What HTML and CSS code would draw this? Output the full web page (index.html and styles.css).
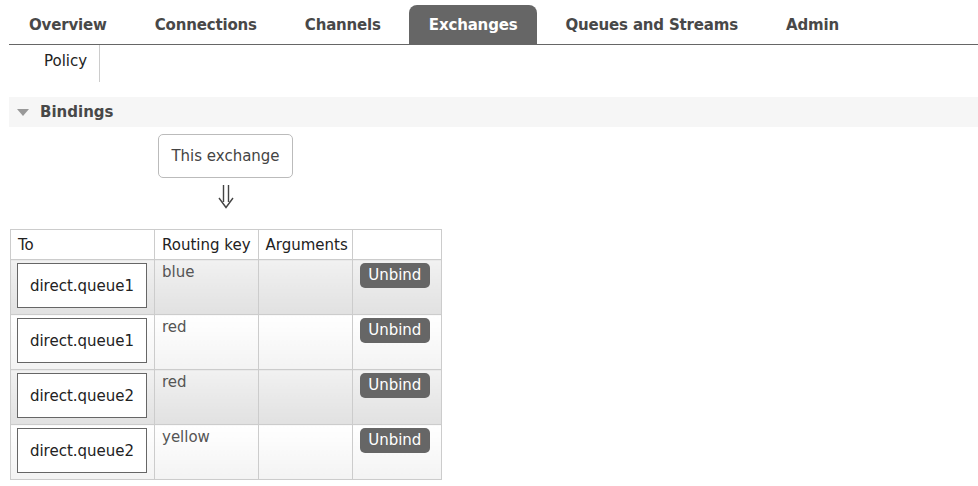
FILE: index.html
```html
<!DOCTYPE html>
<html>
<head>
<meta charset="utf-8">
<link rel="stylesheet" href="styles.css">
</head>
<body>
<div class="page">
  <div class="menu">
    <ul class="tabs">
      <li class="tab">Overview</li>
      <li class="tab">Connections</li>
      <li class="tab">Channels</li>
      <li class="tab active">Exchanges</li>
      <li class="tab">Queues and Streams</li>
      <li class="tab">Admin</li>
    </ul>
    <ul class="subtabs">
      <li class="subtab">Policy</li>
    </ul>
  </div>

  <div class="section">
    <h2 class="sec-head"><span class="tri"></span>Bindings</h2>
    <div class="diagram">
      <div class="exch">This exchange</div>
      <div class="arrow">
        <svg width="16" height="24" viewBox="0 0 16 24" aria-label="⇓">
          <path d="M5.5 0 V17 M10.5 0 V17 M1 13 L8 22.5 L15 13" fill="none" stroke="#444" stroke-width="1.4" stroke-linejoin="miter"/>
        </svg>
      </div>
    </div>
    <table class="bindings">
      <thead>
        <tr><th class="c-to">To</th><th class="c-key">Routing key</th><th class="c-args">Arguments</th><th class="c-act"></th></tr>
      </thead>
      <tbody>
        <tr class="odd"><td><div class="q">direct.queue1</div></td><td class="key">blue</td><td></td><td class="act"><span class="btn">Unbind</span></td></tr>
        <tr class="even"><td><div class="q">direct.queue1</div></td><td class="key">red</td><td></td><td class="act"><span class="btn">Unbind</span></td></tr>
        <tr class="odd"><td><div class="q">direct.queue2</div></td><td class="key">red</td><td></td><td class="act"><span class="btn">Unbind</span></td></tr>
        <tr class="even"><td><div class="q">direct.queue2</div></td><td class="key">yellow</td><td></td><td class="act"><span class="btn">Unbind</span></td></tr>
      </tbody>
    </table>
  </div>
</div>
</body>
</html>
```

FILE: styles.css
```css
html, body {
  margin: 0;
  padding: 0;
  background: #fff;
}
body {
  font-family: "DejaVu Sans", Verdana, sans-serif;
  font-size: 15px;
  color: #484848;
}
.page {
  padding: 5px 0 0 9px;
}
.tabs {
  list-style: none;
  margin: 0;
  padding: 0;
  display: flex;
  border-bottom: 1px solid #666;
  height: 39px;
}
.tab {
  padding: 0 20px;
  margin-right: 8px;
  font-weight: bold;
  font-size: 15px;
  letter-spacing: -0.17px;
  line-height: 41px;
  color: #484848;
  border-radius: 8px 8px 0 0;
  white-space: nowrap;
}
.tab.active {
  background: #666;
  color: #fff;
}
.subtabs {
  list-style: none;
  margin: 0;
  padding: 0 0 0 35px;
  display: flex;
}
.subtab {
  height: 37px;
  line-height: 32px;
  padding-right: 12px;
  border-right: 1px solid #ccc;
  color: #222;
  font-size: 15px;
}
.section {
  margin-top: 15px;
}
.sec-head {
  margin: 0;
  height: 30px;
  background: #f6f6f6;
  font-size: 15px;
  font-weight: bold;
  line-height: 31px;
  color: #484848;
  display: flex;
  align-items: center;
}
.tri {
  width: 0;
  height: 0;
  border-left: 6.5px solid transparent;
  border-right: 6.5px solid transparent;
  border-top: 7px solid #999;
  margin: 1px 11px 0 8px;
}
.diagram {
  margin: 7px 0 0 149px;
  width: 135px;
  display: flex;
  flex-direction: column;
  align-items: center;
}
.exch {
  box-sizing: border-box;
  width: 135px;
  height: 44px;
  border: 1px solid #bbb;
  border-radius: 5px;
  display: flex;
  align-items: center;
  justify-content: center;
  color: #444;
}
.arrow {
  height: 51px;
  padding-top: 7px;
  box-sizing: border-box;
  display: flex;
  justify-content: center;
}
.arrow svg {
  display: block;
}
.bindings {
  border-collapse: collapse;
  margin-left: 1px;
  font-size: 15px;
}
.bindings th {
  font-weight: normal;
  text-align: left;
  color: #222;
  height: 29px;
  padding: 0 7px;
  border: 1px solid #ccc;
  background: #fff;
  white-space: nowrap;
}
.c-to { width: 129px; }
.c-key { width: 86px; }
.bindings th.c-args { width: 80px; padding-right: 4px; }
.c-act { width: 74px; }
.bindings td {
  border: 1px solid #ccc;
  vertical-align: top;
  padding: 0;
  height: 54px;
}
.odd td {
  background: linear-gradient(#f1f1f1, #e1e1e1);
}
.even td {
  background: linear-gradient(#ffffff, #f3f3f3);
}
.q {
  box-sizing: border-box;
  margin: 3px 0 0 6px;
  width: 130px;
  height: 45px;
  border: 1px solid #666;
  background: #fff;
  display: flex;
  align-items: center;
  justify-content: center;
  color: #222;
}
.bindings td.key {
  padding: 0 7px;
  line-height: 24px;
  color: #555;
}
.bindings td.act {
  padding: 0 7px;
}
.btn {
  display: block;
  margin-top: 3px;
  width: 70px;
  height: 25px;
  line-height: 25px;
  text-align: center;
  background: #666;
  color: #fff;
  border-radius: 5px;
}
```
